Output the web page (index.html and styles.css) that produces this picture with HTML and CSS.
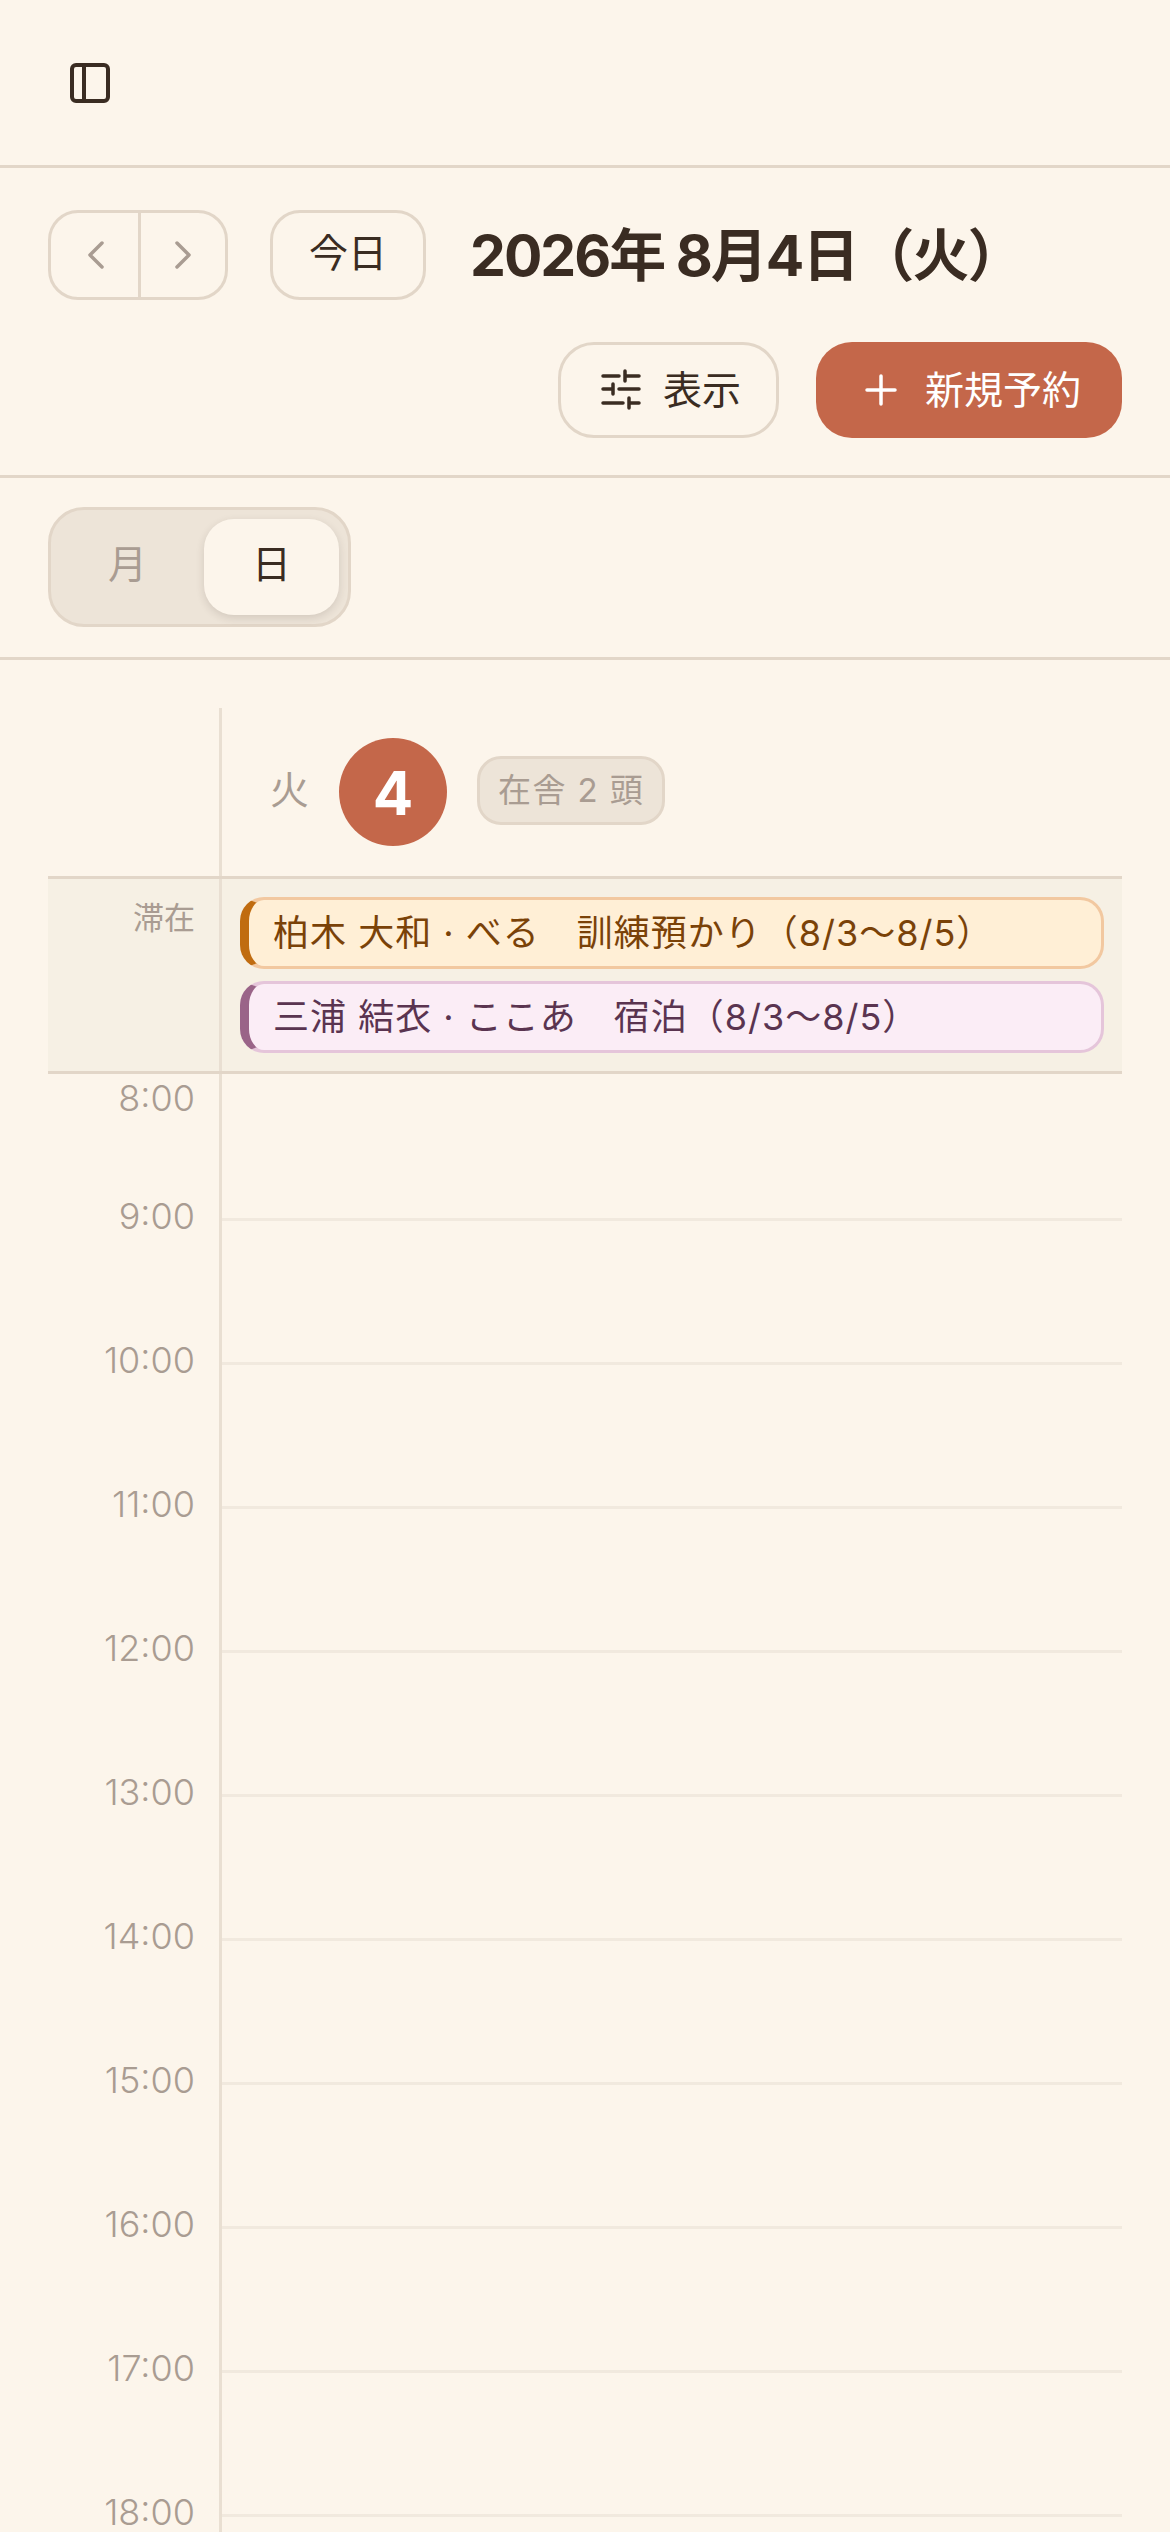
FILE: index.html
```html
<!DOCTYPE html>
<html lang="ja">
<head>
<meta charset="utf-8">
<title>予約カレンダー</title>
<link rel="stylesheet" href="styles.css">
</head>
<body>
<div class="app">
  <header class="topbar">
    <svg class="icon-panel" viewBox="0 0 24 24"><rect x="3" y="3" width="18" height="18" rx="2"/><path d="M9 3v18"/></svg>
  </header>
  <section class="toolbar">
    <div class="toolbar-row">
      <div class="nav-group">
        <button class="nav-btn nav-prev"><svg class="icon-chev" viewBox="0 0 24 24"><path d="m15 18-6-6 6-6"/></svg></button>
        <button class="nav-btn nav-next"><svg class="icon-chev" viewBox="0 0 24 24"><path d="m9 18 6-6-6-6"/></svg></button>
      </div>
      <button class="today-btn">今日</button>
      <h1 class="title">2026年 8月4日（火）</h1>
    </div>
    <div class="toolbar-actions">
      <button class="view-btn"><svg class="icon-sliders" viewBox="0 0 48 48"><path d="M4 10h16M26 10h14M26 5v10M4 23h10M14 18v10M20 23h20M4 37h20M30 37h10M30 32v10"/></svg><span class="btn-label">表示</span></button>
      <button class="new-btn"><svg class="icon-btn" viewBox="0 0 24 24"><path d="M5 12h14M12 5v14"/></svg><span class="btn-label">新規予約</span></button>
    </div>
  </section>
  <section class="tabs-bar">
    <div class="tabs">
      <div class="tab">月</div>
      <div class="tab tab-active">日</div>
    </div>
  </section>
  <main class="calendar">
    <div class="day-head">
      <div class="gutter"></div>
      <div class="day-info">
        <span class="dow">火</span>
        <span class="day-num">4</span>
        <span class="badge">在舎 2 頭</span>
      </div>
    </div>
    <div class="stay-row">
      <div class="gutter stay-label">滞在</div>
      <div class="stay-events">
        <div class="event event-orange">柏木 大和 · べる　訓練預かり（8/3〜8/5）</div>
        <div class="event event-plum">三浦 結衣 · ここあ　宿泊（8/3〜8/5）</div>
      </div>
    </div>
    <div class="hours">
      <div class="hour hour-first"><div class="gutter"><span class="hour-label">8:00</span></div><div class="slot"></div></div>
      <div class="hour"><div class="gutter"><span class="hour-label">9:00</span></div><div class="slot"></div></div>
      <div class="hour"><div class="gutter"><span class="hour-label">10:00</span></div><div class="slot"></div></div>
      <div class="hour"><div class="gutter"><span class="hour-label">11:00</span></div><div class="slot"></div></div>
      <div class="hour"><div class="gutter"><span class="hour-label">12:00</span></div><div class="slot"></div></div>
      <div class="hour"><div class="gutter"><span class="hour-label">13:00</span></div><div class="slot"></div></div>
      <div class="hour"><div class="gutter"><span class="hour-label">14:00</span></div><div class="slot"></div></div>
      <div class="hour"><div class="gutter"><span class="hour-label">15:00</span></div><div class="slot"></div></div>
      <div class="hour"><div class="gutter"><span class="hour-label">16:00</span></div><div class="slot"></div></div>
      <div class="hour"><div class="gutter"><span class="hour-label">17:00</span></div><div class="slot"></div></div>
      <div class="hour"><div class="gutter"><span class="hour-label">18:00</span></div><div class="slot"></div></div>
    </div>
  </main>
</div>
</body>
</html>
```
FILE: styles.css
```css
* { box-sizing: border-box; margin: 0; padding: 0; }
html, body { height: 100%; }
body {
  background: #fcf5eb;
  color: #3a2c22;
  font-family: "Inter", "Noto Sans CJK JP", sans-serif;
  overflow: hidden;
}
button { font: inherit; color: inherit; background: none; border: 0; }
.app { height: 2532px; overflow: hidden; }

.topbar {
  height: 168px;
  border-bottom: 3px solid #e2d6c8;
  display: flex;
  align-items: center;
  padding-left: 66px;
}
.icon-panel { width: 48px; height: 48px; fill: none; stroke: #3a2c22; stroke-width: 2; stroke-linecap: round; stroke-linejoin: round; }

.toolbar {
  height: 310px;
  border-bottom: 3px solid #e2d6c8;
  padding: 42px 48px 0;
}
.toolbar-row { display: flex; align-items: center; height: 90px; }
.nav-group {
  width: 180px; height: 90px;
  border: 3px solid #e2d6c8;
  border-radius: 30px;
  display: flex;
}
.nav-btn { flex: 1; display: flex; align-items: center; justify-content: center; }
.nav-prev { padding-left: 3px; }
.nav-next { border-left: 3px solid #e2d6c8; }
.icon-chev { width: 48px; height: 48px; fill: none; stroke: #a99c92; stroke-width: 1.75; stroke-linecap: round; stroke-linejoin: round; }
.today-btn {
  width: 156px; height: 90px;
  margin-left: 42px;
  padding-bottom: 10px;
  border: 3px solid #e2d6c8;
  border-radius: 30px;
  font-size: 39px;
}
.title { margin-left: 44px; font-size: 57px; font-weight: 700; letter-spacing: -2px; line-height: 86px; white-space: nowrap; padding-top: 2px; }

.toolbar-actions { display: flex; justify-content: flex-end; gap: 37px; margin-top: 42px; }
.view-btn, .new-btn {
  height: 96px;
  border-radius: 36px;
  display: flex; align-items: center;
  font-size: 39px;
}
.btn-label { margin-bottom: 6px; }
.view-btn { width: 221px; border: 3px solid #e2d6c8; padding-left: 38px; gap: 16px; }
.new-btn { width: 306px; background: #c4674a; color: #fff; padding-left: 41px; gap: 20px; }
.icon-btn { width: 48px; height: 48px; fill: none; stroke: currentColor; stroke-width: 1.75; stroke-linecap: round; stroke-linejoin: round; }
.icon-sliders { width: 48px; height: 48px; fill: none; stroke: currentColor; stroke-width: 3.5; stroke-linecap: round; stroke-linejoin: round; }

.tabs-bar { height: 182px; border-bottom: 3px solid #e2d6c8; padding: 29px 48px 0; }
.tabs {
  width: 303px; height: 120px;
  background: #ede4d8;
  border: 3px solid #e2d6c8;
  border-radius: 36px;
  padding: 9px;
  display: flex; gap: 9px;
}
.tab {
  flex: 1;
  display: flex; align-items: center; justify-content: center;
  padding-bottom: 12px;
  border-radius: 30px;
  font-size: 39px;
  color: #a99c92;
}
.tab-active { background: #fcf5eb; color: #3a2c22; box-shadow: 0 3px 9px rgba(58,44,34,.14); }

.calendar { margin: 48px 48px 0; }
.gutter { width: 174px; flex: none; border-right: 3px solid #e9dfd2; }
.day-head { display: flex; height: 168px; }
.day-info { display: flex; align-items: center; padding-left: 48px; }
.dow { font-size: 39px; color: #a99c92; margin-bottom: 10px; }
.day-num {
  width: 108px; height: 108px; border-radius: 50%;
  background: #c4674a; color: #fff;
  display: flex; align-items: center; justify-content: center;
  font-size: 60px; font-weight: 700;
  margin-left: 30px;
  padding-top: 2px;
}
.badge {
  height: 69px; margin: -3px 0 0 30px; padding: 0 18px 6px;
  background: #ede4d8;
  border: 3px solid #e2d6c8;
  border-radius: 24px;
  display: flex; align-items: center;
  font-size: 33px; letter-spacing: 1.4px; color: #a99c92;
}

.stay-row {
  display: flex;
  background: #f6f0e4;
  border-top: 3px solid #e2d6c8;
  border-bottom: 3px solid #e2d6c8;
}
.stay-label { font-size: 31px; color: #a99c92; text-align: right; padding: 18px 24px 0 0; line-height: 42px; }
.stay-events { flex: 1; padding: 18px; display: flex; flex-direction: column; gap: 12px; }
.event {
  height: 72px;
  border: 3px solid;
  border-left-width: 9px;
  border-radius: 24px;
  padding: 0 0 6px 24px;
  display: flex; align-items: center;
  font-size: 36px;
  letter-spacing: 1px;
  white-space: pre;
}
.event-orange { background: #ffefd6; border-color: #f2c8a0; border-left-color: #c06c10; color: #7a4208; }
.event-plum { background: #fbedf6; border-color: #e5c5da; border-left-color: #9a6488; color: #5a3450; }

.hour { display: flex; height: 144px; }
.hour .gutter { text-align: right; padding-right: 24px; }
.hour-label { display: block; font-size: 36px; font-weight: 300; line-height: 36px; color: #a99c92; margin-top: -20px; }
.hour-first .hour-label { margin-top: 6px; }
.slot { flex: 1; }
.hour:not(.hour-first) .slot { border-top: 3px solid #f1e9de; }
```
